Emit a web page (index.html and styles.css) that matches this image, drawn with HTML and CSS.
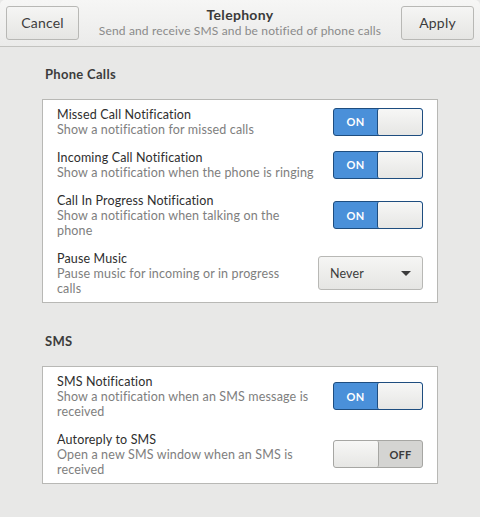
FILE: index.html
```html
<!DOCTYPE html>
<html>
<head>
<meta charset="utf-8">
<link rel="stylesheet" href="styles.css">
</head>
<body>
<header class="headerbar">
  <button class="btn">Cancel</button>
  <div class="titles">
    <div class="title">Telephony</div>
    <div class="subtitle">Send and receive SMS and be notified of phone calls</div>
  </div>
  <button class="btn">Apply</button>
</header>
<main class="content">
  <h2 class="section-title">Phone Calls</h2>
  <div class="list">
    <div class="row">
      <div class="labels">
        <div class="row-title">Missed Call Notification</div>
        <div class="row-sub">Show a notification for missed calls</div>
      </div>
      <div class="switch on"><span class="state">ON</span><span class="knob"></span></div>
    </div>
    <div class="row">
      <div class="labels">
        <div class="row-title">Incoming Call Notification</div>
        <div class="row-sub">Show a notification when the phone is ringing</div>
      </div>
      <div class="switch on"><span class="state">ON</span><span class="knob"></span></div>
    </div>
    <div class="row">
      <div class="labels">
        <div class="row-title">Call In Progress Notification</div>
        <div class="row-sub">Show a notification when talking on the phone</div>
      </div>
      <div class="switch on"><span class="state">ON</span><span class="knob"></span></div>
    </div>
    <div class="row">
      <div class="labels">
        <div class="row-title">Pause Music</div>
        <div class="row-sub">Pause music for incoming or in progress calls</div>
      </div>
      <div class="combo"><span>Never</span><span class="arrow"></span></div>
    </div>
  </div>
  <h2 class="section-title sms">SMS</h2>
  <div class="list">
    <div class="row">
      <div class="labels">
        <div class="row-title">SMS Notification</div>
        <div class="row-sub">Show a notification when an SMS message is received</div>
      </div>
      <div class="switch on"><span class="state">ON</span><span class="knob"></span></div>
    </div>
    <div class="row">
      <div class="labels">
        <div class="row-title">Autoreply to SMS</div>
        <div class="row-sub">Open a new SMS window when an SMS is received</div>
      </div>
      <div class="switch off"><span class="knob"></span><span class="state">OFF</span></div>
    </div>
  </div>
</main>
</body>
</html>
```
FILE: styles.css
```css
* { box-sizing: border-box; }
html, body { margin: 0; padding: 0; }
body {
  width: 480px;
  height: 517px;
  background: #e8e8e7;
  font-family: Lato, "Open Sans", sans-serif;
  font-size: 12.5px;
  letter-spacing: 0.15px;
  color: #3c3c3c;
  overflow: hidden;
}
.headerbar {
  height: 47px;
  display: flex;
  align-items: center;
  justify-content: space-between;
  padding: 0 6px 1px 6px;
  background: linear-gradient(#f6f6f5, #ebebea);
  border-bottom: 1px solid #c3c3c0;
  border-radius: 5px 5px 0 0;
}
.btn {
  width: 73px;
  height: 34px;
  border: 1px solid #b8b8b5;
  border-radius: 3px;
  background: linear-gradient(#f5f5f4, #e5e5e3);
  font-family: inherit;
  font-size: 14px;
  letter-spacing: 0.2px;
  color: #3c3c3c;
  padding: 0;
}
.titles { text-align: center; }
.title {
  font-weight: bold;
  font-size: 14px;
  line-height: 16px;
  letter-spacing: 0.3px;
  color: #3a3a3a;
}
.subtitle {
  font-size: 12px;
  line-height: 15px;
  color: #8a8a8a;
}
.content {
  padding: 19px 42px 0 42px;
}
.section-title {
  margin: 0 0 17px 3px;
  font-size: 13px;
  font-weight: bold;
  line-height: 16px;
  letter-spacing: 0.3px;
  color: #3c3c3c;
}
.section-title.sms { margin-top: 30px; }
.list {
  background: #fff;
  border: 1px solid #b8b8b5;
  padding: 0 14px 0 14px;
}
.row {
  display: flex;
  align-items: center;
  justify-content: space-between;
  padding: 6.5px 0;
}
.labels { flex: 1; padding-right: 17px; line-height: 15px; }
.row-title { color: #2e2e2e; }
.row-sub { color: #7e7e7e; }
.switch {
  flex: none;
  width: 90px;
  height: 28px;
  border-radius: 3px;
  display: flex;
  overflow: hidden;
  font-size: 11px;
  font-weight: bold;
  letter-spacing: 0.3px;
}
.switch.on {
  background: #4a90d9;
  border: 1px solid #1e4d7f;
}
.switch.off {
  background: #d4d4d2;
  border: 1px solid #a6a6a3;
}
.switch .state {
  flex: 1;
  display: flex;
  align-items: center;
  justify-content: center;
}
.switch.on .state { color: #fff; }
.switch.off .state { color: #3a3a3a; }
.switch .knob {
  width: 45px;
  height: 100%;
  background: linear-gradient(#f7f7f6, #e6e6e4);
  border-radius: 2px;
}
.switch.on .knob { border-left: 1px solid #1e4d7f; }
.switch.off .knob { border-right: 1px solid #a6a6a3; }
.combo {
  flex: none;
  width: 105px;
  height: 34px;
  border: 1px solid #b8b8b5;
  border-radius: 3px;
  background: linear-gradient(#f5f5f4, #e5e5e3);
  display: flex;
  align-items: center;
  justify-content: space-between;
  padding: 0 11px 0 11px;
  color: #3c3c3c;
}
.arrow {
  width: 0;
  height: 0;
  border-left: 5px solid transparent;
  border-right: 5px solid transparent;
  border-top: 5px solid #3c3c3c;
}
```
